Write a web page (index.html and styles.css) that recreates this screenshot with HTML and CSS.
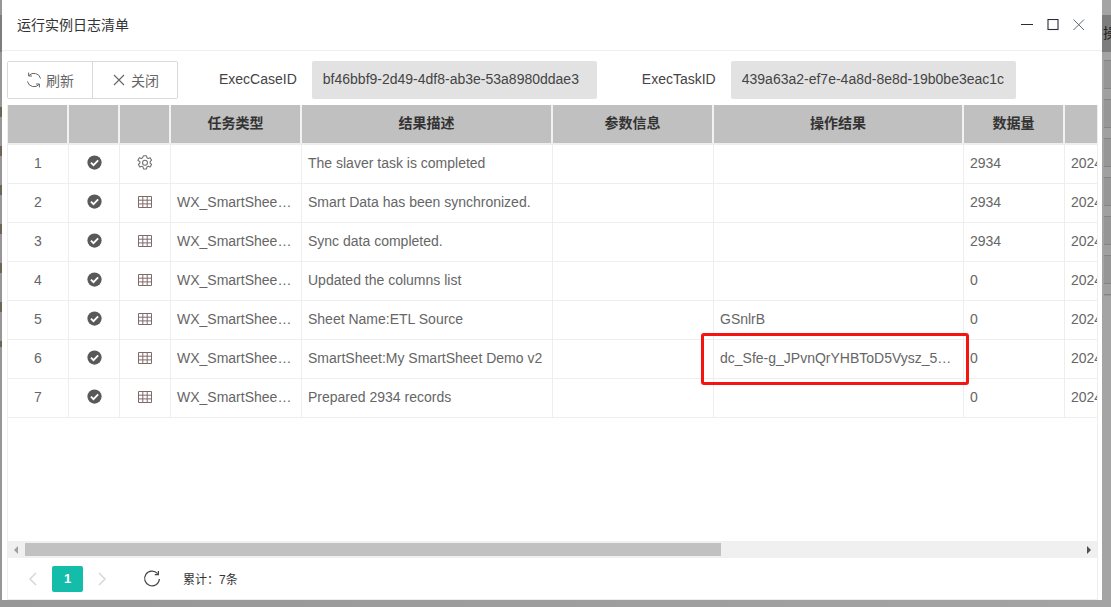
FILE: index.html
```html
<!DOCTYPE html>
<html lang="zh">
<head>
<meta charset="utf-8">
<title>运行实例日志清单</title>
<link rel="stylesheet" href="styles.css">
</head>
<body>
<div class="backdrop">
  <div class="behind-band"></div>
  <div class="behind-left"></div>
  <div class="behind-right"></div>
  <span class="behind-text">操</span>
  <section class="dialog">
    <header class="title-bar">
      <h1 class="title">运行实例日志清单</h1>
      <div class="window-controls">
        <svg class="win-icon" viewBox="0 0 12 12"><path d="M0 5.5h12" stroke="#2b2b3a" stroke-width="1" fill="none"/></svg>
        <svg class="win-icon" viewBox="0 0 12 12"><rect x="1" y="0.5" width="10" height="10" stroke="#2b2b3a" stroke-width="1.1" fill="none"/></svg>
        <svg class="win-icon" viewBox="0 0 12 12"><path d="M0.5 0.5l10.5 10.5M11 0.5L0.5 11" stroke="#5f6a78" stroke-width="1" fill="none"/></svg>
      </div>
    </header>
    <div class="toolbar">
      <div class="btn-group">
        <button class="btn">
          <svg class="btn-icon" viewBox="0 0 16 16"><path d="M14.6 6.6A6.8 6.8 0 0 0 2.9 3.6M1.4 9.4A6.8 6.8 0 0 0 13.1 12.4M2.6 0.6v3.4h3.4M13.4 15.4v-3.4h-3.4" fill="none" stroke="#666" stroke-width="1"/></svg>
          <span>刷新</span>
        </button>
        <button class="btn">
          <svg class="btn-icon" viewBox="0 0 16 16"><path d="M3 3l10 10M13 3L3 13" fill="none" stroke="#666" stroke-width="1.1"/></svg>
          <span>关闭</span>
        </button>
      </div>
      <label class="field-label first">ExecCaseID</label>
      <div class="field-value case">bf46bbf9-2d49-4df8-ab3e-53a8980ddae3</div>
      <label class="field-label second">ExecTaskID</label>
      <div class="field-value task">439a63a2-ef7e-4a8d-8e8d-19b0be3eac1c</div>
    </div>
    <div class="frame">
      <div class="grid-wrap">
        <div class="grid-body">
          <div class="row head">
            <div class="c c1"></div><div class="c c2"></div><div class="c c3"></div>
            <div class="c c4">任务类型</div><div class="c c5">结果描述</div><div class="c c6">参数信息</div>
            <div class="c c7">操作结果</div><div class="c c8">数据量</div><div class="c c9"></div>
          </div>
          <div class="row">
            <div class="c c1">1</div>
            <div class="c c2"><svg class="check" viewBox="0 0 16 16"><use href="#i-check"/></svg></div>
            <div class="c c3"><svg class="type-icon" viewBox="0 0 16 16"><use href="#i-gear"/></svg></div>
            <div class="c c4"></div><div class="c c5">The slaver task is completed</div><div class="c c6"></div><div class="c c7"></div><div class="c c8">2934</div><div class="c c9">2024-01-05 10:21:08</div>
          </div>
          <div class="row">
            <div class="c c1">2</div>
            <div class="c c2"><svg class="check" viewBox="0 0 16 16"><use href="#i-check"/></svg></div>
            <div class="c c3"><svg class="type-icon" viewBox="0 0 16 16"><use href="#i-table"/></svg></div>
            <div class="c c4">WX_SmartSheetTask</div><div class="c c5">Smart Data has been synchronized.</div><div class="c c6"></div><div class="c c7"></div><div class="c c8">2934</div><div class="c c9">2024-01-05 10:21:08</div>
          </div>
          <div class="row">
            <div class="c c1">3</div>
            <div class="c c2"><svg class="check" viewBox="0 0 16 16"><use href="#i-check"/></svg></div>
            <div class="c c3"><svg class="type-icon" viewBox="0 0 16 16"><use href="#i-table"/></svg></div>
            <div class="c c4">WX_SmartSheetTask</div><div class="c c5">Sync data completed.</div><div class="c c6"></div><div class="c c7"></div><div class="c c8">2934</div><div class="c c9">2024-01-05 10:21:08</div>
          </div>
          <div class="row">
            <div class="c c1">4</div>
            <div class="c c2"><svg class="check" viewBox="0 0 16 16"><use href="#i-check"/></svg></div>
            <div class="c c3"><svg class="type-icon" viewBox="0 0 16 16"><use href="#i-table"/></svg></div>
            <div class="c c4">WX_SmartSheetTask</div><div class="c c5">Updated the columns list</div><div class="c c6"></div><div class="c c7"></div><div class="c c8">0</div><div class="c c9">2024-01-05 10:21:07</div>
          </div>
          <div class="row">
            <div class="c c1">5</div>
            <div class="c c2"><svg class="check" viewBox="0 0 16 16"><use href="#i-check"/></svg></div>
            <div class="c c3"><svg class="type-icon" viewBox="0 0 16 16"><use href="#i-table"/></svg></div>
            <div class="c c4">WX_SmartSheetTask</div><div class="c c5">Sheet Name:ETL Source</div><div class="c c6"></div><div class="c c7">GSnlrB</div><div class="c c8">0</div><div class="c c9">2024-01-05 10:21:07</div>
          </div>
          <div class="row">
            <div class="c c1">6</div>
            <div class="c c2"><svg class="check" viewBox="0 0 16 16"><use href="#i-check"/></svg></div>
            <div class="c c3"><svg class="type-icon" viewBox="0 0 16 16"><use href="#i-table"/></svg></div>
            <div class="c c4">WX_SmartSheetTask</div><div class="c c5">SmartSheet:My SmartSheet Demo v2</div><div class="c c6"></div><div class="c c7">dc_Sfe-g_JPvnQrYHBToD5Vysz_5Jd8kLm2</div><div class="c c8">0</div><div class="c c9">2024-01-05 10:21:07</div>
          </div>
          <div class="row">
            <div class="c c1">7</div>
            <div class="c c2"><svg class="check" viewBox="0 0 16 16"><use href="#i-check"/></svg></div>
            <div class="c c3"><svg class="type-icon" viewBox="0 0 16 16"><use href="#i-table"/></svg></div>
            <div class="c c4">WX_SmartSheetTask</div><div class="c c5">Prepared 2934 records</div><div class="c c6"></div><div class="c c7"></div><div class="c c8">0</div><div class="c c9">2024-01-05 10:21:06</div>
          </div>
        </div>
        <div class="highlight"></div>
        <div class="scrollbar">
          <span class="arrow left"></span>
          <div class="track"><div class="thumb"></div></div>
          <span class="arrow right"></span>
        </div>
      </div>
      <footer class="pager">
        <svg class="chev" viewBox="0 0 10 14"><path d="M8 1L2 7l6 6" fill="none" stroke="#d4d8de" stroke-width="1.5"/></svg>
        <span class="page-num">1</span>
        <svg class="chev" viewBox="0 0 10 14"><path d="M2 1l6 6-6 6" fill="none" stroke="#d4d8de" stroke-width="1.5"/></svg>
        <svg class="reload" viewBox="0 0 18 18"><path d="M14.6 3.6A7.4 7.4 0 1 0 16.4 9" fill="none" stroke="#444" stroke-width="1.2"/><path d="M15.4 1v3.6h-3.6" fill="none" stroke="#444" stroke-width="1.2"/></svg>
        <span class="total">累计：7条</span>
      </footer>
    </div>
  </section>
</div>
<svg class="defs" aria-hidden="true">
  <defs>
    <symbol id="i-check" viewBox="0 0 16 16">
      <circle cx="8" cy="8" r="7.6" fill="#595959"/>
      <path d="M4.2 8.2l2.7 2.6 5-5" fill="none" stroke="#fff" stroke-width="2"/>
    </symbol>
    <symbol id="i-gear" viewBox="0.5 0.5 15 15">
      <path d="M6.6 1.2h2.8l.4 1.9 1.2.6 1.8-.7 1.4 2.4-1.4 1.3v1.4l1.4 1.3-1.4 2.4-1.8-.7-1.2.6-.4 1.9H6.6l-.4-1.9-1.2-.6-1.8.7-1.4-2.4 1.4-1.3V6.7L1.3 5.4l1.4-2.4 1.8.7 1.2-.6z" fill="none" stroke="#6f6f6f" stroke-width="1" stroke-linejoin="round"/>
      <circle cx="8" cy="7.8" r="2.3" fill="none" stroke="#6f6f6f" stroke-width="1"/>
    </symbol>
    <symbol id="i-table" viewBox="0 0 16 16">
      <path d="M1.5 2.5h13v11h-13zM1.5 6.2h13M1.5 9.9h13M5.8 2.5v11M10.2 2.5v11" fill="none" stroke="#7f6a6c" stroke-width="1"/>
    </symbol>
  </defs>
</svg>
</body>
</html>
```

FILE: styles.css
```css
* { box-sizing: border-box; }
html, body { margin: 0; height: 100%; overflow: hidden; }
body { font-family: "Liberation Sans", "Noto Sans CJK SC", sans-serif; font-size: 14px; color: #666; }
.backdrop { position: relative; width: 1111px; height: 607px; background: linear-gradient(90deg, #979797, #a4a4a4); padding-left: 2px; }
.behind-band { position: absolute; left: 0; right: 0; top: 15px; height: 37px; background: #7d7d7d; }
.behind-left { position: absolute; left: 0; top: 107px; width: 2px; height: 240px; background: repeating-linear-gradient(180deg, #6d6558 0, #6d6558 10px, transparent 10px, transparent 39px); }
.behind-right { position: absolute; left: 1104px; top: 60px; width: 7px; height: 236px; background: repeating-linear-gradient(180deg, #858585 0, #858585 1px, #969696 1px, #969696 28px, #858585 28px, #858585 29px, #a0a0a0 29px, #a0a0a0 39px); }
.behind-text { position: absolute; left: 1103px; top: 22px; font-size: 14px; color: #222; }
.dialog { position: relative; width: 1100px; height: 600px; background: #fff; display: flex; flex-direction: column; }
.title-bar { height: 51px; flex: none; border-bottom: 1px solid #eee; display: flex; align-items: center; justify-content: space-between; padding: 0 17px 0 15px; }
.title { margin: 0; font-size: 14px; font-weight: 400; color: #333; line-height: 1; }
.window-controls { display: flex; gap: 14px; }
.win-icon { width: 12px; height: 12px; display: block; }
.toolbar { height: 54px; flex: none; display: flex; align-items: flex-start; padding: 10px 0 0 5px; }
.btn-group { display: flex; height: 38px; border: 1px solid #d9d9d9; border-radius: 2px; }
.btn { height: 100%; padding: 0; background: #fff; border: 0; font: inherit; color: #666; display: flex; align-items: center; justify-content: center; gap: 4px; width: 84px; }
.btn + .btn { border-left: 1px solid #d9d9d9; width: 85px; }
.btn-icon { width: 16px; height: 16px; }
.field-label { line-height: 37px; color: #444; }
.field-label.first { margin-left: 41px; }
.field-label.second { margin-left: 45px; }
.field-value { height: 38px; line-height: 37px; background: #e2e2e2; border-radius: 2px; padding-left: 11px; color: #444; }
.field-value.case { width: 285px; margin-left: 15px; }
.field-value.task { width: 285px; margin-left: 15px; }
.frame { flex: 1; min-height: 0; margin-left: 5px; width: 1091px; display: flex; flex-direction: column; border: 1px solid #eee; border-top: 0; }
.grid-wrap { position: relative; flex: 1; min-height: 0; display: flex; flex-direction: column; overflow: hidden; }
.grid-body { flex: 1; overflow: hidden; }
.row { display: flex; height: 39px; width: 1300px; border-bottom: 1px solid #eee; }
.row.head { background: #c0c0c0; height: 40px; border-bottom: 2px solid #eee; color: #333; font-weight: 700; }
.c { flex: none; height: 100%; border-right: 1px solid #eee; padding: 0 6px; line-height: 36px; white-space: nowrap; overflow: hidden; text-overflow: ellipsis; }
.head .c { text-align: center; line-height: 37px; border-right: 2px solid #f2f2f2; }
.c1 { width: 61px; text-align: center; }
.c2 { width: 51px; }
.c3 { width: 51px; }
.c2, .c3 { display: flex; align-items: center; justify-content: center; padding-bottom: 3px; }
.c4 { width: 131px; }
.c5 { width: 251px; }
.c6 { width: 161px; }
.c7 { width: 250px; }
.c8 { width: 101px; }
.c9 { width: 200px; text-overflow: clip; }
.check { width: 15px; height: 15px; }
.type-icon { width: 16px; height: 16px; }
.highlight { position: absolute; left: 693px; top: 228px; width: 268px; height: 52px; border: 3px solid #f5140f; border-radius: 3px; }
.scrollbar { flex: none; height: 17px; background: #f0f0f0; display: flex; align-items: center; }
.track { flex: 1; height: 13px; position: relative; }
.thumb { width: 696px; height: 100%; margin-left: 1px; background: #c1c1c1; }
.arrow { flex: none; width: 16px; height: 100%; display: flex; align-items: center; justify-content: center; }
.arrow::before { content: ""; border: 4px solid transparent; }
.arrow.left::before { border-right-color: #a0a0a0; border-left-width: 0; }
.arrow.right::before { border-left-color: #505050; border-right-width: 0; }
.pager { height: 41px; flex: none; display: flex; align-items: center; padding-left: 20px; }
.chev { width: 10px; height: 14px; }
.page-num { width: 31px; height: 26px; margin: 0 14px; background: #14bcaa; border-radius: 2px; color: #fff; font-size: 13px; font-weight: 700; text-align: center; line-height: 26px; }
.reload { width: 18px; height: 18px; margin-left: 36px; }
.total { margin-left: 22px; font-size: 12px; color: #333; }
.defs { position: absolute; width: 0; height: 0; }
```
